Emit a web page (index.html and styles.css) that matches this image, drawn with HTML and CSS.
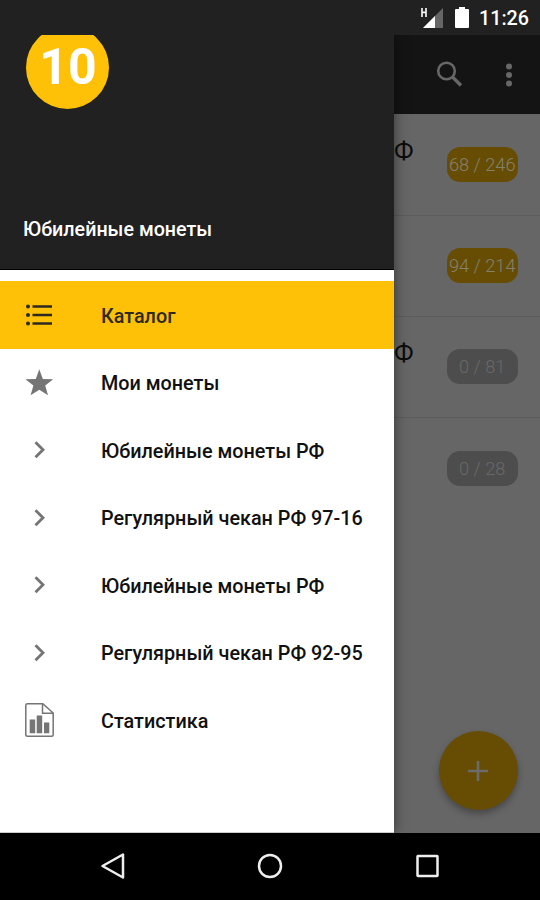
FILE: index.html
```html
<!DOCTYPE html>
<html lang="ru">
<head>
<meta charset="utf-8">
<title>Юбилейные монеты</title>
<link rel="stylesheet" href="styles.css">
</head>
<body>
<header class="status">
  <svg class="signal" width="25" height="24" viewBox="0 0 25 24"><path d="M24 1v20H4z" fill="#666"/><path d="M16 9V21H4z" fill="#fff"/><path d="M3 1v9M7 1v9M3 5.400h4" stroke="#fff" stroke-width="1.600"/></svg>
  <svg class="battery" width="14" height="21" viewBox="0 0 14 21"><path d="M4 0h6v2h3q1 0 1 1v17q0 1-1 1H1q-1 0-1-1V3q0-1 1-1h3z" fill="#fff"/></svg>
  <time>11:26</time>
</header>
<main class="app">
  <nav class="drawer">
    <div class="head">
      <div class="logo"><span>10</span></div>
      <h1>Юбилейные монеты</h1>
    </div>
    <ul class="menu">
      <li class="item active"><svg class="icon" viewBox="0 0 34 34"><path d="M9.500 6.500h19.500M9.500 15h19.500M9.500 23.500h19.500" stroke="#2d2a22" stroke-width="2.700"/><g fill="#2d2a22"><circle cx="5" cy="6.500" r="2"/><circle cx="5" cy="15" r="2"/><circle cx="5" cy="23.500" r="2"/></g></svg><span>Каталог</span></li>
      <li class="item"><svg class="icon" viewBox="0 0 34 34"><path d="M16.300 1.200l3.500 9.700 10.400.400-8 6.300 2.800 9.700-8.700-5.600-8.700 5.600 2.800-9.700-8-6.300 10.400-.400z" fill="#757575"/></svg><span>Мои монеты</span></li>
      <li class="item"><svg class="icon" viewBox="0 0 34 34"><path d="M12.500 7.300l7.500 7.500-7.500 7.500" fill="none" stroke="#757575" stroke-width="2.800"/></svg><span>Юбилейные монеты РФ</span></li>
      <li class="item"><svg class="icon" viewBox="0 0 34 34"><path d="M12.500 7.300l7.500 7.500-7.500 7.500" fill="none" stroke="#757575" stroke-width="2.800"/></svg><span>Регулярный чекан РФ 97-16</span></li>
      <li class="item"><svg class="icon" viewBox="0 0 34 34"><path d="M12.500 7.300l7.500 7.500-7.500 7.500" fill="none" stroke="#757575" stroke-width="2.800"/></svg><span>Юбилейные монеты РФ</span></li>
      <li class="item"><svg class="icon" viewBox="0 0 34 34"><path d="M12.500 7.300l7.500 7.500-7.500 7.500" fill="none" stroke="#757575" stroke-width="2.800"/></svg><span>Регулярный чекан РФ 92-95</span></li>
      <li class="item"><svg class="icon tall" viewBox="0 0 34 38"><path d="M4.500 2.700h15.300L30.200 12v21.800q0 1.500-1.500 1.500H4.300q-1.500 0-1.500-1.500V4.200q0-1.500 1.700-1.500zM19.500 3v9.200H30" fill="none" stroke="#757575" stroke-width="1.500"/><path d="M6.700 18.500h5.500v13.800H6.700zM13.700 14.500h5.500v17.800h-5.500zM21 21.500h5.300v10.800H21z" fill="#757575"/></svg><span>Статистика</span></li>
    </ul>
  </nav>
  <section class="page">
    <div class="toolbar">
      <svg class="search" width="28" height="28" viewBox="0 0 28 28" fill="none" stroke="#676767"><circle cx="10.500" cy="10" r="8.300" stroke-width="2.600"/><path d="M16.500 16l8.500 8.500" stroke-width="3.300"/></svg>
      <svg width="8" height="26" viewBox="0 0 8 26" fill="#676767"><circle cx="4" cy="4.500" r="3"/><circle cx="4" cy="13" r="3"/><circle cx="4" cy="21.500" r="3"/></svg>
    </div>
    <div class="row first"><span class="tail">Ф</span><span class="pill gold">68 / 246</span></div>
    <div class="row"><span class="pill gold">94 / 214</span></div>
    <div class="row"><span class="tail">Ф</span><span class="pill">0 / 81</span></div>
    <div class="row last"><span class="pill">0 / 28</span></div>
    <div class="fab"><svg width="20" height="20" viewBox="0 0 20 20"><path d="M10 0v20M0 10h20" stroke="#6b6b6b" stroke-width="2.600"/></svg></div>
  </section>
</main>
<footer class="navbar">
  <svg width="26" height="28" viewBox="0 0 26 28"><path d="M23 2.500v23L2.500 14z"/></svg>
  <svg width="26" height="28" viewBox="0 0 26 28"><circle cx="13" cy="14" r="11"/></svg>
  <svg width="26" height="28" viewBox="0 0 26 28"><rect x="3.500" y="4" width="20" height="20" rx=".5"/></svg>
</footer>
</body>
</html>
```
FILE: styles.css
```css
* { box-sizing: border-box; }
body {
  margin: 0;
  width: 540px;
  height: 900px;
  overflow: hidden;
  display: flex;
  flex-direction: column;
  font-family: Roboto, "Liberation Sans", sans-serif;
  background: #000;
}
svg { display: block; flex: none; }
.status {
  height: 35px;
  flex: none;
  background: #212121;
  color: #fff;
  display: flex;
  align-items: flex-start;
  padding: 7px 11px 0 0;
  justify-content: flex-end;
}
.signal { margin: 0 11px 0 0; }
.battery { margin-right: 10px; }
.status time { font-size: 19.7px; font-weight: 500; line-height: 24px; }
.app { height: 798px; flex: none; display: flex; overflow: hidden; }
.drawer {
  width: 394px;
  flex: none;
  background: #fff;
  border-bottom: 1px solid #ccc;
  box-shadow: 0 0 12px rgba(0, 0, 0, .5);
  z-index: 1;
}
.head {
  height: 235px;
  background: #212121;
  border-bottom: 1px solid #000;
  overflow: hidden;
  display: flex;
  flex-direction: column;
  justify-content: space-between;
  padding: 0 23px 27px;
}
.logo {
  width: 83px;
  height: 83px;
  margin: -9px 0 0 3px;
  padding: 0 0 2px 1px;
  border-radius: 50%;
  background: #ffc107;
  color: #fff;
  display: flex;
  align-items: center;
  justify-content: center;
  font-size: 50px;
  line-height: 60px;
  font-weight: 700;
}
h1 { margin: 0; font-size: 19.7px; line-height: 24px; font-weight: 500; color: #fff; }
.menu { list-style: none; margin: 0; padding: 11.400px 0 0; }
.item {
  height: 67.500px;
  display: flex;
  align-items: center;
  padding-left: 23px;
  font-size: 19.8px;
  font-weight: 500;
  color: #111;
}
.active { background: #ffc107; color: #2d2a22; }
.icon { width: 34px; height: 34px; margin: 3.800px 44px 0 0; }
.icon.tall { height: 38px; margin-top: 0; }
.item span { padding-top: 2.400px; }
.page { flex: 1; background: #666; position: relative; }
.toolbar {
  height: 79px;
  background: #141414;
  display: flex;
  align-items: center;
  justify-content: flex-end;
  padding-right: 27px;
}
.search { margin-right: 41px; }
.row {
  height: 101.200px;
  display: flex;
  align-items: center;
  justify-content: flex-end;
  padding: 0 22.500px 1.200px 0;
  border-bottom: 1px solid #5c5c5c;
}
.first { height: 102px; padding-bottom: 0; }
.last { border-bottom: 0; }
.tail { margin-right: auto; font-size: 25.3px; line-height: 30px; padding-bottom: 25px; color: #0c0c0c; }
.pill {
  width: 70.500px;
  height: 35px;
  border-radius: 13px;
  background: #4d4d4d;
  color: #696969;
  display: flex;
  align-items: center;
  justify-content: center;
  font-size: 18.2px;
  font-weight: 300;
  white-space: nowrap;
}
.gold { background: #664d03; color: #85816f; }
.fab {
  position: absolute;
  right: 22.500px;
  bottom: 23px;
  width: 79px;
  height: 79px;
  border-radius: 50%;
  background: #664d03;
  box-shadow: 0 4px 7px rgba(0, 0, 0, .3);
  display: flex;
  align-items: center;
  justify-content: center;
}
.navbar {
  flex: 1;
  background: #000;
  display: flex;
  align-items: center;
  justify-content: space-between;
  padding: 0 100px 1px;
}
.navbar svg { fill: none; stroke: #eee; stroke-width: 2.500; stroke-linejoin: round; }
```
